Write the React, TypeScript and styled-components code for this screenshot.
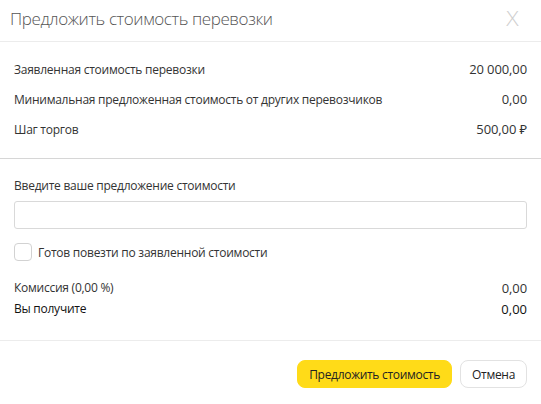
import React from "react";
import styled, { createGlobalStyle } from "styled-components";

const Global = createGlobalStyle`
  html, body { margin: 0; padding: 0; background: #fff; }
  body { font-family: "Open Sans", "Noto Sans", Arial, sans-serif; color: #333; }
  * { box-sizing: border-box; }
`;

const Dialog = styled.div`
  width: 541px;
  height: 404px;
  background: #fff;
  display: flex;
  flex-direction: column;
`;

const Header = styled.div`
  height: 42px;
  border-bottom: 1px solid #ececec;
  display: flex;
  align-items: center;
  justify-content: space-between;
  padding: 0 23px 4px 10px;
`;

const Title = styled.div`
  font-size: 17px;
  font-weight: 300;
  color: #555;
  letter-spacing: -0.4px;
`;

const Close = styled.div`
  font-size: 20px;
  font-weight: 300;
  color: #d0d0d0;
  line-height: 1;
  transform: scaleX(1.15);
`;

const Info = styled.div`
  padding: 12px 14px 14px 14px;
  border-bottom: 1px solid #d6d6d6;
  display: flex;
  flex-direction: column;
`;

const Row = styled.div<{ $h?: number; $strong?: boolean }>`
  height: ${(p) => p.$h ?? 30}px;
  display: flex;
  align-items: center;
  justify-content: space-between;
  font-size: 12px;
  letter-spacing: -0.25px;
  color: ${(p) => (p.$strong ? "#111" : "#333")};
  font-weight: ${(p) => (p.$strong ? 500 : 400)};
`;

const Value = styled.span<{ $big?: boolean }>`
  font-size: 13px;
  letter-spacing: ${(p) => (p.$big ? 0 : -0.1)}px;
`;

const Form = styled.div`
  padding: 18px 14px 0 14px;
  display: flex;
  flex-direction: column;
  border-bottom: 1px solid #ececec;
  height: 182px;
`;

const Label = styled.div`
  font-size: 12px;
  letter-spacing: -0.25px;
  color: #333;
  margin-bottom: 7px;
`;

const Input = styled.input`
  height: 28px;
  width: 100%;
  border: 1px solid #d9d9d9;
  border-radius: 3px;
  outline: none;
`;

const Check = styled.label`
  display: flex;
  align-items: center;
  gap: 6px;
  margin-top: 14px;
  margin-bottom: 16px;
  font-size: 12px;
  letter-spacing: -0.25px;
  color: #333;
`;

const Box = styled.span`
  width: 18px;
  height: 18px;
  border: 1px solid #d2d2d2;
  border-radius: 4px;
  display: inline-block;
`;

const Footer = styled.div`
  display: flex;
  justify-content: flex-end;
  gap: 8px;
  padding: 19px 14px 0 0;
`;

const Button = styled.button<{ $primary?: boolean }>`
  height: 28px;
  padding: 0 11px;
  border-radius: 8px;
  font-family: inherit;
  font-size: 12px;
  letter-spacing: -0.3px;
  color: #222;
  background: ${(p) => (p.$primary ? "#ffdb18" : "#fff")};
  border: 1px solid ${(p) => (p.$primary ? "#ffdb18" : "#e2e2e2")};
`;

export default function App() {
  return (
    <>
      <Global />
      <Dialog>
        <Header>
          <Title>Предложить стоимость перевозки</Title>
          <Close>X</Close>
        </Header>
        <Info>
          <Row>
            <span>Заявленная стоимость перевозки</span>
            <Value>20 000,00</Value>
          </Row>
          <Row>
            <span>Минимальная предложенная стоимость от других перевозчиков</span>
            <Value>0,00</Value>
          </Row>
          <Row>
            <span>Шаг торгов</span>
            <Value>500,00 ₽</Value>
          </Row>
        </Info>
        <Form>
          <Label>Введите ваше предложение стоимости</Label>
          <Input />
          <Check>
            <Box />
            <span>Готов повезти по заявленной стоимости</span>
          </Check>
          <Row $h={21}>
            <span>Комиссия (0,00 %)</span>
            <Value>0,00</Value>
          </Row>
          <Row $h={21} $strong>
            <span>Вы получите</span>
            <Value $big>0,00</Value>
          </Row>
        </Form>
        <Footer>
          <Button $primary>Предложить стоимость</Button>
          <Button>Отмена</Button>
        </Footer>
      </Dialog>
    </>
  );
}
